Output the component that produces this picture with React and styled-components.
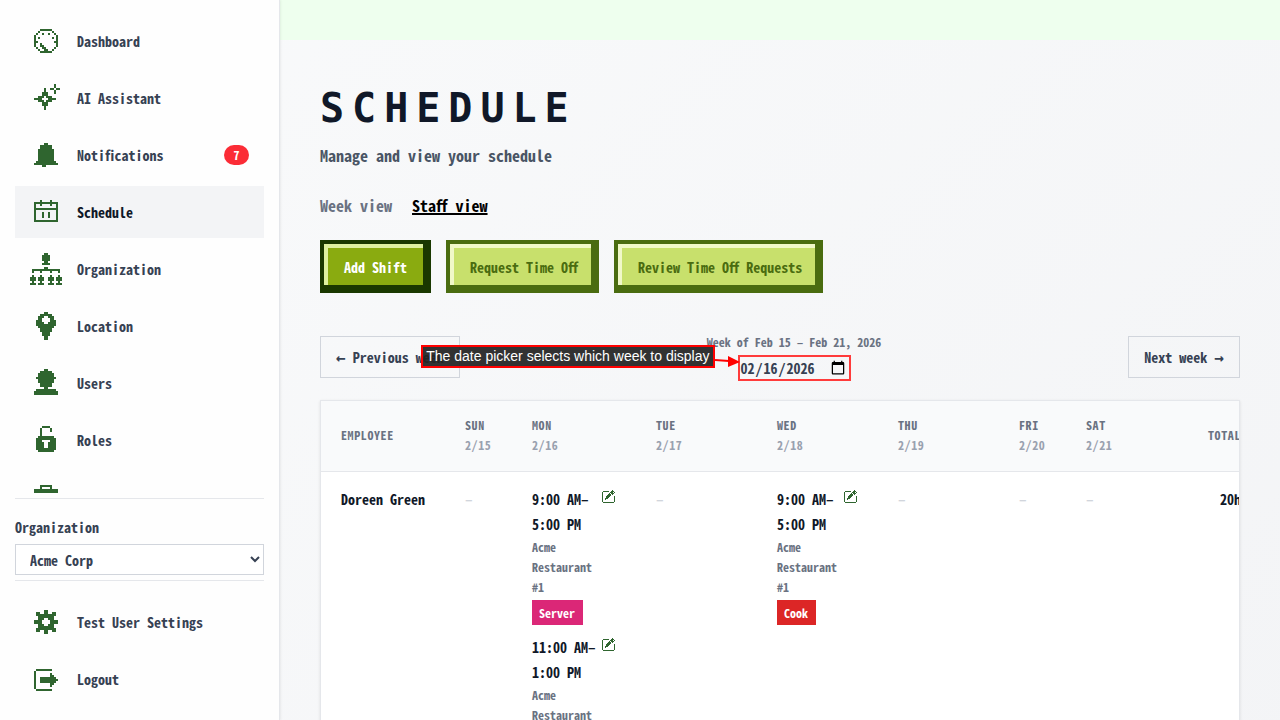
import styled, { createGlobalStyle } from "styled-components";
import { useState } from "react";

// every icon is a bitmap: one string per row, "#" is a filled cell
const icons = {
  dashboard: [
    "",
    "",
    "     ######",
    "    #      #",
    "   #  #  #  #",
    "  #          #",
    "  # #      # #",
    "  #          #",
    "  ##        ##",
    "  #  #       #",
    "  #  ##      #",
    "   #  ##    #",
    "    #  ##  #",
    "     ######",
  ],
  assistant: [
    "",
    "            #",
    "            #",
    "       #  ## ##",
    "       #    #",
    "      ###   #",
    "      ###",
    "    ### ###",
    "  ####   ####",
    "    ### ###",
    "      ###",
    "      ###",
    "       #",
    "       #",
  ],
  notifications: [
    "",
    "",
    "       ##",
    "     ######",
    "     ######",
    "    ########",
    "    ########",
    "    ########",
    "    ########",
    "    ########",
    "    ########",
    "   ##########",
    "  ############",
    "      ##",
  ],
  schedule: [
    "",
    "",
    "     #    #",
    "  ############",
    "  #  #    #  #",
    "  #          #",
    "  ############",
    "  #          #",
    "  #   #  #   #",
    "  #   #  #   #",
    "  #   #  #   #",
    "  #          #",
    "  ############",
  ],
  organization: [
    "       ##",
    "      ####",
    "      ####",
    "      ####",
    "       ##",
    "      ####",
    "",
    "       ##",
    " ##############",
    " #   #    #   #",
    "",
    " #   #    #   #",
    "### ###  ### ###",
    "### ###  ### ###",
    " #   #    #   #",
    "### ###  ### ###",
  ],
  location: [
    "",
    "       ##",
    "     ######",
    "    ###  ###",
    "    ##    ##",
    "   ###    ###",
    "   ####  ####",
    "   ##########",
    "    ########",
    "     ######",
    "     ######",
    "      ####",
    "      ####",
    "       ##",
    "       ##",
  ],
  users: [
    "",
    "       ##",
    "     ######",
    "    ########",
    "    ########",
    "   ##########",
    "    ########",
    "    ########",
    "     ######",
    "     ######",
    "       ##",
    "   ##########",
    "  ############",
    "  ############",
  ],
  roles: [
    "",
    "      ####",
    "     #    #",
    "     #    #",
    "     #",
    "     #",
    "    ########",
    "   ##########",
    "   ###    ###",
    "   ####  ####",
    "   ####  ####",
    "   ####  ####",
    "   ##########",
    "    ########",
  ],
  toolbox: [
    "",
    "",
    "     ######",
    "     #    #",
    "  ############",
    "  ############",
    "  ############",
    "  ############",
  ],
  settings: [
    "",
    "",
    "       ##",
    "   ##  ##  ##",
    "   ##########",
    "    ########",
    "    ###  ###",
    "  ####    ####",
    "  ####    ####",
    "    ###  ###",
    "    ########",
    "   ##########",
    "   ##  ##  ##",
    "       ##",
  ],
  logout: [
    "",
    "",
    "",
    "   ########",
    "  #",
    "  #       #",
    "  #       ##",
    "  #  ########",
    "  #  #########",
    "  #  ########",
    "  #       ##",
    "  #       #",
    "  #",
    "   ########",
  ],
  edit: [
    "          #",
    " ######  ###",
    "#       ### #",
    "#      # ###",
    "#     ### #",
    "#    ####",
    "#   ####    #",
    "#   ###     #",
    "#  ###      #",
    "#  #        #",
    "#           #",
    "#           #",
    " ###########",
  ],
};

function PixelIcon({ name, grid = 16, size = 32 }) {
  const d = icons[name]
    .flatMap((row, y) =>
      [...row].map((cell, x) => (cell === "#" ? `M${x} ${y}h1v1h-1z` : ""))
    )
    .join("");

  return (
    <SCIcon
      width={size}
      height={size}
      viewBox={`0 0 ${grid} ${grid}`}
      shapeRendering="crispEdges"
      aria-hidden="true"
    >
      <path d={d} />
    </SCIcon>
  );
}

const links = [
  { label: "Dashboard", icon: "dashboard" },
  { label: "AI Assistant", icon: "assistant" },
  { label: "Notifications", icon: "notifications", count: 7 },
  { label: "Schedule", icon: "schedule", active: true },
  { label: "Organization", icon: "organization" },
  { label: "Location", icon: "location" },
  { label: "Users", icon: "users" },
  { label: "Roles", icon: "roles" },
  { label: "", icon: "toolbox" },
];

const footerLinks = [
  { label: "Test User Settings", icon: "settings" },
  { label: "Logout", icon: "logout" },
];

const days = [
  { name: "Sun", date: "2/15", width: 67 },
  { name: "Mon", date: "2/16", width: 124 },
  { name: "Tue", date: "2/17", width: 121 },
  { name: "Wed", date: "2/18", width: 121 },
  { name: "Thu", date: "2/19", width: 121 },
  { name: "Fri", date: "2/20", width: 67 },
  { name: "Sat", date: "2/21", width: 121 },
];

const employees = [
  {
    name: "Doreen Green",
    total: "20h",
    shifts: {
      Mon: [
        { start: "9:00 AM", end: "5:00 PM", place: "Acme Restaurant #1", role: "Server", color: "#db2777" },
        { start: "11:00 AM", end: "1:00 PM", place: "Acme Restaurant #1", role: "Server", color: "#db2777" },
      ],
      Wed: [
        { start: "9:00 AM", end: "5:00 PM", place: "Acme Restaurant #1", role: "Cook", color: "#dc2626" },
      ],
    },
  },
];

function NavItem({ link }) {
  return (
    <SCNavLink href="#" $active={link.active} aria-label={link.label || link.icon}>
      <PixelIcon name={link.icon} />
      <span>{link.label}</span>
      {link.count && <SCCount>{link.count}</SCCount>}
    </SCNavLink>
  );
}

function Shift({ shift }) {
  return (
    <SCShift>
      <div>
        <SCTime>
          {shift.start}–<wbr />
          {shift.end}
        </SCTime>
        <SCPlace>{shift.place}</SCPlace>
        <SCRole $color={shift.color}>{shift.role}</SCRole>
      </div>
      <SCEditButton aria-label="Edit shift">
        <PixelIcon name="edit" grid={13} size={13} />
      </SCEditButton>
    </SCShift>
  );
}

export default function App() {
  const [date, setDate] = useState("2026-02-16");

  return (
    <SCLayout>
      <GlobalStyle />

      <SCSidebar>
        <SCNav>
          {links.map((link) => (
            <NavItem key={link.icon} link={link} />
          ))}
        </SCNav>

        <SCOrganization>
          <label htmlFor="organization">Organization</label>
          <select id="organization">
            <option>Acme Corp</option>
          </select>
        </SCOrganization>

        <SCFooterNav>
          {footerLinks.map((link) => (
            <NavItem key={link.icon} link={link} />
          ))}
        </SCFooterNav>
      </SCSidebar>

      <SCMain>
        <SCBanner />
        <SCContent>
          <SCTitle>SCHEDULE</SCTitle>
          <SCSubtitle>Manage and view your schedule</SCSubtitle>

          <SCTabs>
            <SCTab href="#">Week view</SCTab>
            <SCTab href="#" $active>
              Staff view
            </SCTab>
          </SCTabs>

          <SCActions>
            <SCPrimaryButton>Add Shift</SCPrimaryButton>
            <SCSecondaryButton>Request Time Off</SCSecondaryButton>
            <SCSecondaryButton>Review Time Off Requests</SCSecondaryButton>
          </SCActions>

          <SCWeekBar>
            <SCWeekButton>
              <SCArrow>←</SCArrow> Previous week
            </SCWeekButton>
            <SCWeek>
              <label htmlFor="week">Week of Feb 15 – Feb 21, 2026</label>
              <SCDateBox>
                <input
                  id="week"
                  type="date"
                  value={date}
                  onChange={(e) => setDate(e.target.value)}
                />
                <SCHint>
                  <p>The date picker selects which week to display</p>
                  <svg width="25" height="14" viewBox="0 0 25 14" aria-hidden="true">
                    <path d="M0 6L14 7" stroke="#ff0000" strokeWidth="2" />
                    <path d="M13 2L25 8L13 13Z" fill="#ff0000" />
                  </svg>
                </SCHint>
              </SCDateBox>
            </SCWeek>
            <SCWeekButton>
              Next week <SCArrow>→</SCArrow>
            </SCWeekButton>
          </SCWeekBar>

          <SCCard>
            <SCTable>
              <colgroup>
                <col style={{ width: 124 }} />
                {days.map((day) => (
                  <col key={day.name} style={{ width: day.width }} />
                ))}
                <col style={{ width: 74 }} />
              </colgroup>
              <thead>
                <tr>
                  <th>Employee</th>
                  {days.map((day) => (
                    <th key={day.name}>
                      {day.name}
                      <SCDate>{day.date}</SCDate>
                    </th>
                  ))}
                  <SCTotalHead>Total</SCTotalHead>
                </tr>
              </thead>
              <tbody>
                {employees.map((employee) => (
                  <tr key={employee.name}>
                    <td>{employee.name}</td>
                    {days.map((day) => (
                      <td key={day.name}>
                        {employee.shifts[day.name] ? (
                          <SCShifts>
                            {employee.shifts[day.name].map((shift) => (
                              <Shift key={shift.start} shift={shift} />
                            ))}
                          </SCShifts>
                        ) : (
                          <SCEmpty>–</SCEmpty>
                        )}
                      </td>
                    ))}
                    <SCTotal>{employee.total}</SCTotal>
                  </tr>
                ))}
              </tbody>
            </SCTable>
          </SCCard>
        </SCContent>
      </SCMain>
    </SCLayout>
  );
}

const GlobalStyle = createGlobalStyle`
  * {
    box-sizing: border-box;
  }

  body {
    margin: 0;
    color: #364153;
  }

  body, button, input, select {
    font-family: "Noto Sans CJK SC", "Liberation Mono", monospace;
    font-feature-settings: "hwid";
    font-size: 14px;
    font-weight: 700;
    line-height: 20px;
  }

  h1, p {
    margin: 0;
  }
`;

const SCIcon = styled.svg`
  display: block;
  flex-shrink: 0;
  fill: #2f652f;
`;

const SCLayout = styled.div`
  display: flex;
  align-items: flex-start;
  min-height: 100vh;
  background: linear-gradient(135deg, #f9fafb, #f3f4f6);
`;

const SCSidebar = styled.aside`
  position: sticky;
  top: 0;
  display: flex;
  flex-direction: column;
  flex-shrink: 0;
  width: 280px;
  height: 100vh;
  padding: 15px;
  background: #fefefe;
  border-right: 1px solid #e5e7eb;
  box-shadow: 1px 0 2px rgba(0, 0, 0, 0.06);
`;

const SCNav = styled.nav`
  flex: 1;
  display: flex;
  flex-direction: column;
  gap: 5px;
  min-height: 0;
  margin-bottom: 5px;
  overflow: hidden;
`;

const SCNavLink = styled.a`
  display: flex;
  align-items: center;
  flex-shrink: 0;
  gap: 15px;
  height: 52px;
  padding: 0 15px;
  background: ${({ $active }) => ($active ? "#f3f4f6" : "transparent")};
  color: ${({ $active }) => ($active ? "#101828" : "#364153")};
  text-decoration: none;
`;

const SCCount = styled.span`
  width: 25px;
  margin-left: auto;
  border-radius: 10px;
  background: #fb2c36;
  color: white;
  font-size: 12px;
  text-align: center;
`;

const SCOrganization = styled.div`
  display: flex;
  flex-direction: column;
  gap: 7px;
  padding: 18px 0 5px;
  border-top: 1px solid #e5e7eb;

  > select {
    height: 31px;
    padding: 0 10px;
    border: 1px solid #d1d5dc;
    border-radius: 0;
    background: white;
    color: #364153;
  }
`;

const SCFooterNav = styled.nav`
  display: flex;
  flex-direction: column;
  gap: 5px;
  padding-top: 15px;
  border-top: 1px solid #e5e7eb;
`;

const SCMain = styled.main`
  flex: 1;
  min-width: 0;
`;

const SCBanner = styled.div`
  height: 40px;
  background: #eeffee;
`;

const SCContent = styled.div`
  padding: 40px;
`;

const SCTitle = styled.h1`
  color: #101828;
  font-family: "DejaVu Sans Mono", monospace;
  font-size: 40px;
  font-weight: 700;
  letter-spacing: 0.2em;
  line-height: 56px;
`;

const SCSubtitle = styled.p`
  margin-top: 7px;
  color: #4a5565;
  font-size: 16px;
  line-height: 24px;
`;

const SCTabs = styled.div`
  display: flex;
  gap: 20px;
  margin-top: 26px;
`;

const SCTab = styled.a`
  color: ${({ $active }) => ($active ? "#000" : "#6a7282")};
  font-size: 16px;
  line-height: 24px;
  text-decoration: ${({ $active }) => ($active ? "underline" : "none")};
  text-decoration-thickness: 2px;
`;

const SCActions = styled.div`
  display: flex;
  gap: 15px;
  margin-top: 23px;
`;

const SCPrimaryButton = styled.button`
  height: 53px;
  padding: 0 20px;
  border: 4px solid #1a3800;
  background: #8aab10;
  box-shadow: inset -4px -4px #1a3800, inset 4px 4px #def0a0;
  color: white;
  white-space: nowrap;
`;

const SCSecondaryButton = styled(SCPrimaryButton)`
  padding: 0 17px 0 20px;
  border-color: #4a6c10;
  background: #c8e06c;
  box-shadow: inset -4px -4px #4a6c10, inset 4px 4px #f0f8c8;
  color: #4a6c10;
`;

const SCWeekBar = styled.div`
  display: flex;
  align-items: center;
  justify-content: space-between;
  margin-top: 40px;
`;

const SCWeekButton = styled.button`
  height: 42px;
  padding: 0 15px;
  border: 1px solid #d1d5dc;
  background: transparent;
  color: #364153;
`;

const SCArrow = styled.span`
  font-family: "DejaVu Sans Mono", monospace;
  font-size: 16px;
`;

const SCWeek = styled.div`
  display: flex;
  flex-direction: column;
  align-items: center;
  gap: 4px;
  color: #6a7282;
  font-size: 12px;
  line-height: 18px;
`;

const SCDateBox = styled.div`
  position: relative;
  display: flex;
  border: 2px solid #ff3b3b;

  > input {
    height: 22px;
    padding: 0 3px 0 0;
    border: none;
    background: transparent;
    color: #364153;
  }

  > input::-webkit-calendar-picker-indicator {
    width: 16px;
    height: 16px;
    padding: 0;
  }
`;

const SCHint = styled.div`
  position: absolute;
  top: -12px;
  right: 100%;
  display: flex;
  align-items: flex-end;

  > p {
    padding: 0 3px;
    border: 2px solid #ff0000;
    background: rgba(34, 34, 34, 0.93);
    color: white;
    font-family: "Liberation Sans", sans-serif;
    font-feature-settings: normal;
    font-size: 14px;
    font-weight: 400;
    line-height: 19px;
    white-space: nowrap;
  }
`;

const SCCard = styled.div`
  margin-top: 19px;
  overflow-x: auto;
  border: 1px solid #e5e7eb;
  background: white;
  box-shadow: 0 1px 3px rgba(0, 0, 0, 0.1);
`;

const SCTable = styled.table`
  width: 100%;
  min-width: 940px;
  table-layout: fixed;
  border-collapse: collapse;

  th {
    padding: 14px 20px 16px;
    border-bottom: 1px solid #e5e7eb;
    background: #f9fafb;
    color: #6a7282;
    font-size: 12px;
    letter-spacing: 0.05em;
    text-align: left;
    text-transform: uppercase;
  }

  td {
    padding: 15px 20px;
    color: #101828;
    line-height: 25px;
    vertical-align: top;
    white-space: nowrap;
  }
`;

const SCDate = styled.div`
  color: #99a1af;
`;

const SCTotalHead = styled.th`
  && {
    text-align: right;
  }
`;

const SCTotal = styled.td`
  text-align: right;
`;

const SCEmpty = styled.span`
  color: #d1d5dc;
`;

const SCShifts = styled.div`
  display: flex;
  flex-direction: column;
  gap: 10px;
`;

const SCShift = styled.div`
  display: flex;
  align-items: flex-start;
  justify-content: space-between;
  gap: 3px;
  white-space: normal;
`;

const SCTime = styled.div`
  line-height: 25px;
`;

const SCPlace = styled.div`
  color: #6a7282;
  font-size: 12px;
  line-height: 20px;
`;

const SCRole = styled.div`
  width: fit-content;
  margin-top: 3px;
  padding: 0 8px 0 7px;
  background: ${({ $color }) => $color};
  color: white;
  font-size: 12px;
`;

const SCEditButton = styled.button`
  flex-shrink: 0;
  width: 14px;
  margin-top: 3px;
  padding: 0;
  border: none;
  background: none;
`;
